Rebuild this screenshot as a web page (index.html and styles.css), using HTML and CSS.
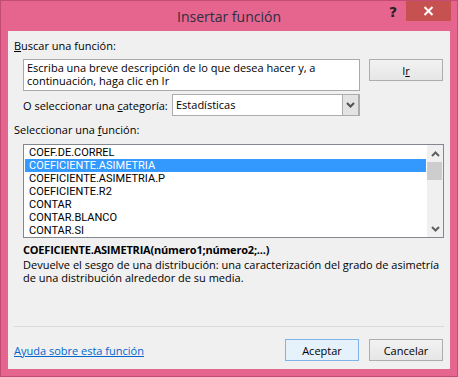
FILE: index.html
```html
<!DOCTYPE html>
<html lang="es">
<head>
<meta charset="utf-8">
<title>Insertar función</title>
<link rel="stylesheet" href="styles.css">
</head>
<body>
<div class="window">
  <div class="titlebar">
    <div class="title">Insertar función</div>
    <div class="controls">
      <div class="help">?</div>
      <div class="close">
        <svg width="11" height="10" viewBox="0 0 11 10"><path d="M1.5 1 L9.5 9 M9.5 1 L1.5 9" stroke="#fff" stroke-width="2"/></svg>
      </div>
    </div>
  </div>
  <div class="panel">
    <div class="label"><u>B</u>uscar una función:</div>
    <div class="search-row">
      <div class="searchbox">Escriba una breve descripción de lo que desea hacer y, a continuación, haga clic en Ir</div>
      <div class="btn btn-ir">I<u>r</u></div>
    </div>
    <div class="cat-row">
      <div class="cat-label">O seleccionar una <u>c</u>ategoría:</div>
      <div class="select">
        <div class="select-value">Estadísticas</div>
        <div class="select-arrow">
          <svg width="9" height="6" viewBox="0 0 9 6"><path d="M1 1 L4.5 4.5 L8 1" fill="none" stroke="#505050" stroke-width="2"/></svg>
        </div>
      </div>
    </div>
    <div class="label label-list">Seleccionar una <u>f</u>unción:</div>
    <div class="listbox">
      <div class="items">
        <div class="item">COEF.DE.CORREL</div>
        <div class="item selected">COEFICIENTE.ASIMETRIA</div>
        <div class="item">COEFICIENTE.ASIMETRIA.P</div>
        <div class="item">COEFICIENTE.R2</div>
        <div class="item">CONTAR</div>
        <div class="item">CONTAR.BLANCO</div>
        <div class="item">CONTAR.SI</div>
      </div>
      <div class="scrollbar">
        <div class="sb-btn">
          <svg width="9" height="6" viewBox="0 0 9 6"><path d="M1 5 L4.5 1.5 L8 5" fill="none" stroke="#606060" stroke-width="2"/></svg>
        </div>
        <div class="sb-thumb"></div>
        <div class="sb-track"></div>
        <div class="sb-btn">
          <svg width="9" height="6" viewBox="0 0 9 6"><path d="M1 1 L4.5 4.5 L8 1" fill="none" stroke="#606060" stroke-width="2"/></svg>
        </div>
      </div>
    </div>
    <div class="syntax">COEFICIENTE.ASIMETRIA(número1;número2;...)</div>
    <div class="desc">Devuelve el sesgo de una distribución: una caracterización del grado de asimetría de una distribución alrededor de su media.</div>
    <div class="footer">
      <div class="separator"></div>
      <div class="footer-row">
        <a class="help-link" href="#">Ayuda sobre esta función</a>
        <div class="buttons">
          <div class="btn btn-primary">Aceptar</div>
          <div class="btn">Cancelar</div>
        </div>
      </div>
    </div>
  </div>
</div>
</body>
</html>
```

FILE: styles.css
```css
* { box-sizing: border-box; }
html, body { margin: 0; padding: 0; }
body {
  width: 458px;
  height: 377px;
  font-family: "Open Sans", "Noto Sans", sans-serif;
  font-size: 11px;
  color: #000;
  background: #f0f0f0;
}
.window {
  width: 458px;
  height: 377px;
  background: #e6658e;
  border: 1px solid #c34d75;
  display: flex;
  flex-direction: column;
}
.titlebar {
  height: 30px;
  display: grid;
  grid-template-columns: 1fr auto 1fr;
}
.title {
  grid-column: 2;
  font-size: 14px;
  color: #2e2e3e;
  line-height: 30px;
  padding-top: 1px;
}
.controls {
  grid-column: 3;
  justify-self: end;
  display: flex;
  align-items: flex-start;
  margin-right: 6px;
}
.help {
  width: 26px;
  text-align: center;
  font-weight: bold;
  font-size: 14px;
  line-height: 22px;
  color: #222;
  font-family: "DejaVu Sans", sans-serif;
}
.close {
  width: 45px;
  height: 20px;
  background: #c75050;
  display: flex;
  align-items: center;
  justify-content: center;
}
.panel {
  margin: 0 7px;
  height: 338px;
  background: #f0f0f0;
  padding: 7px 6px 8px 6px;
  display: flex;
  flex-direction: column;
}
.label { line-height: 16px; }
.search-row {
  display: flex;
  align-items: flex-start;
  margin: 5px 0 0 9px;
  gap: 9px;
}
.searchbox {
  width: 337px;
  height: 32px;
  background: #fff;
  border: 1px solid #a9a9a9;
  padding: 2px 3px;
  line-height: 12.5px;
}
.btn {
  width: 74px;
  height: 22px;
  border: 1px solid #adadad;
  background: linear-gradient(#f2f2f2, #e6e6e6);
  display: flex;
  align-items: center;
  justify-content: center;
}
.cat-row {
  display: flex;
  align-items: center;
  margin: 3px 0 0 9px;
}
.cat-label { width: 149px; }
.select {
  width: 188px;
  height: 22px;
  background: #fff;
  border: 1px solid #acacac;
  display: flex;
}
.select-value {
  flex: 1;
  padding-left: 3px;
  line-height: 20px;
}
.select-arrow {
  width: 17px;
  background: #e3e3e3;
  border-left: 1px solid #acacac;
  border-right: 1px solid #acacac;
  display: flex;
  align-items: center;
  justify-content: center;
}
.label-list { margin-top: 6px; }
.listbox {
  margin: 6px 0 0 9px;
  width: 421px;
  height: 94px;
  border: 1px solid #828790;
  background: #fff;
  display: flex;
}
.items {
  flex: 1;
  padding: 1px 1px 0 1px;
  font-family: Roboto, "Open Sans", sans-serif;
}
.item {
  height: 13px;
  line-height: 13px;
  padding-left: 3px;
  border: 1px solid transparent;
  border-width: 0 1px;
}
.item.selected {
  background: #3399ff;
  color: #fff;
  outline: 1px dotted #d07b2a;
  outline-offset: -1px;
}
.scrollbar {
  width: 16px;
  background: #f0f0f0;
  display: flex;
  flex-direction: column;
}
.sb-btn {
  height: 17px;
  display: flex;
  align-items: center;
  justify-content: center;
}
.sb-thumb {
  height: 18px;
  margin: 0 1px 0 0;
  background: #cdcdcd;
}
.sb-track { flex: 1; }
.syntax {
  margin: 4px 0 0 9px;
  font-weight: bold;
  line-height: 16px;
  letter-spacing: -0.2px;
}
.desc {
  margin: 1px 0 0 9px;
  line-height: 12.5px;
}
.footer { margin-top: auto; }
.separator {
  height: 1px;
  background: #dadada;
}
.footer-row {
  display: flex;
  align-items: center;
  justify-content: space-between;
  margin-top: 12px;
  padding-right: 1px;
}
.help-link {
  color: #0066cc;
  text-decoration: underline;
}
.buttons {
  display: flex;
  gap: 10px;
}
.btn-primary {
  border-color: #7eb4ea;
  background: #e5f1fb;
}
```
